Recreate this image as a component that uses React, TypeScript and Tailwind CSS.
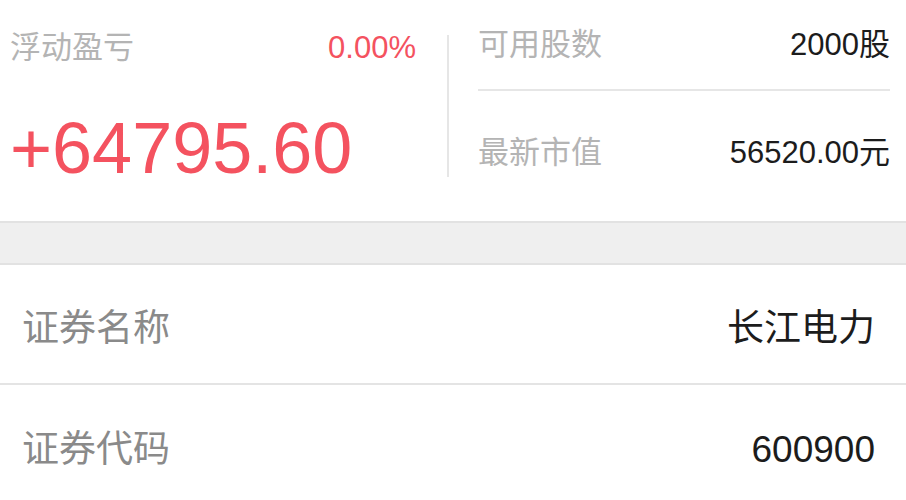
const font = { fontFamily: '"Liberation Sans", "Noto Sans CJK SC", sans-serif' }

function InfoRow({ label, value, last }: { label: string; value: string; last?: boolean }) {
  return (
    <div
      className={
        'flex h-[120px] items-center justify-between pt-[8px] pl-[22px] pr-[31px] bg-white ' +
        (last ? '' : 'border-b-2 border-[#e4e4e4]')
      }
    >
      <span className="text-[37px] leading-none text-[#8a8a8a]">{label}</span>
      <span className="text-[37px] leading-none text-[#1c1c1c]">{value}</span>
    </div>
  )
}

export default function App() {
  return (
    <div className="w-[906px] h-[500px] overflow-hidden bg-white" style={font}>
      {/* profit summary */}
      <div className="flex h-[221px] bg-white">
        <div className="w-[447px] pl-[10px] pr-[31px] pt-[32px]">
          <div className="flex items-center justify-between">
            <span className="text-[31px] leading-none text-[#b4b4b4]">浮动盈亏</span>
            <span className="text-[31px] leading-none text-[#f4525f]">0.00%</span>
          </div>
          <div className="mt-[49px] text-[72px] leading-none text-[#f4525f]">+64795.60</div>
        </div>
        <div className="mt-[35px] h-[142px] w-[2px] bg-[#e6e6e6]" />
        <div className="flex-1 pl-[29px] pr-[16px]">
          <div className="flex h-[91px] items-center justify-between border-b-2 border-[#e6e6e6]">
            <span className="text-[31px] leading-none text-[#b4b4b4]">可用股数</span>
            <span className="text-[31px] leading-none text-[#1c1c1c]">2000股</span>
          </div>
          <div className="flex h-[122px] items-center justify-between">
            <span className="text-[31px] leading-none text-[#b4b4b4]">最新市值</span>
            <span className="text-[31px] leading-none text-[#1c1c1c]">56520.00元</span>
          </div>
        </div>
      </div>

      <div className="h-[44px] bg-[#efefef] border-y-2 border-[#e2e2e2]" />

      <InfoRow label="证券名称" value="长江电力" />
      <InfoRow label="证券代码" value="600900" last />
    </div>
  )
}
